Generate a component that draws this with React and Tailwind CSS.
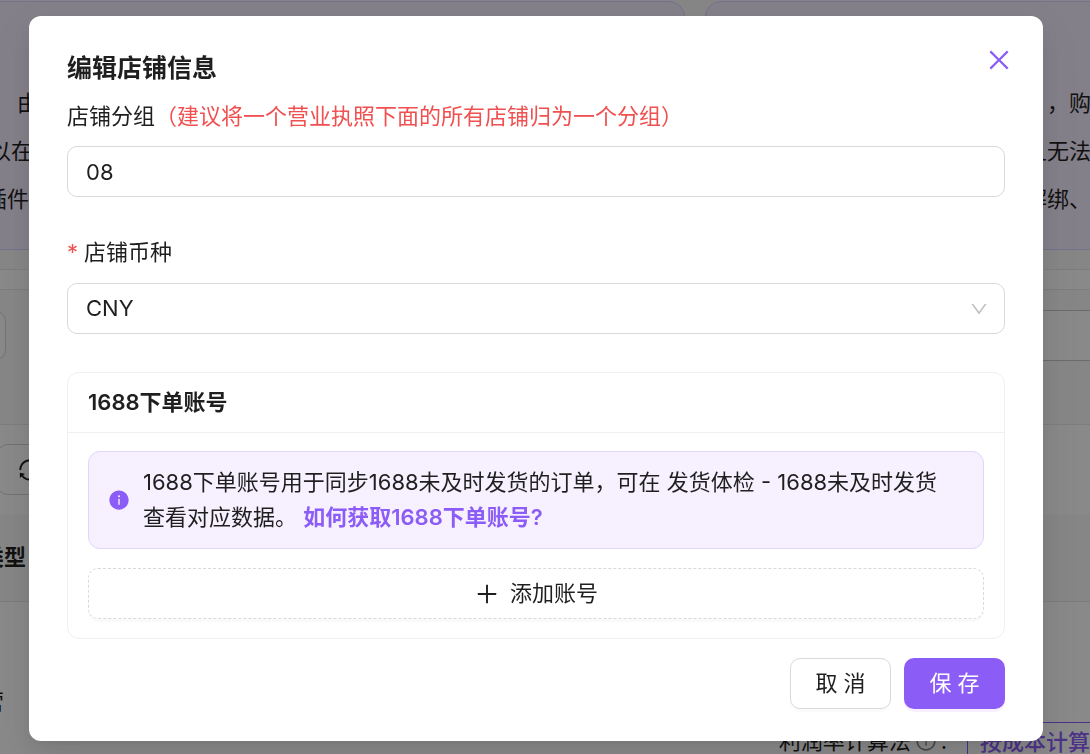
import React, { useState } from "react";
import {
  AiFillInfoCircle,
  AiOutlineClose,
  AiOutlineDown,
  AiOutlineInfoCircle,
  AiOutlinePlus,
  AiOutlineSync,
} from "react-icons/ai";

const ShopPage = () => {
  return (
    <div className="flex h-screen flex-col overflow-hidden bg-white">
      <div className="shrink-0 bg-[#f5f5f5] pt-px pb-[19px]">
        <div className="grid grid-cols-[16fr_9fr] gap-5 leading-[48px]">
          <div className="-ml-5 h-[249px] overflow-hidden rounded-r-2xl border border-[#d9ccff] bg-[#f1eafb] pt-[77px] pl-5 whitespace-nowrap">
            <p className="ml-4">由</p>
            <p className="-ml-3">以在</p>
            <p className="-ml-4">插件中</p>
          </div>
          <div className="-mr-5 h-[249px] overflow-hidden rounded-l-2xl border border-[#d9ccff] bg-[#f1eafb] pt-[77px] pr-[18px] text-right whitespace-nowrap">
            <p>，购</p>
            <p>且无法</p>
            <p>解绑、</p>
          </div>
        </div>
      </div>

      <div className="h-5 shrink-0 border-t border-[#e4e4e4] bg-[#fafafa]" />

      <div className="flex h-[136px] shrink-0 items-start justify-between border-y border-[#e4e4e4] bg-[#f5f5f5] pt-5">
        <input
          aria-label="店铺名称"
          className="-ml-12 h-[51px] w-[54px] rounded-xl border border-[#d0d0d0] bg-[#fafafa]"
        />
        <input
          aria-label="店铺备注"
          className="-mr-5 h-[51px] w-1/5 rounded-xl border border-[#c4c4c4] bg-[#fafafa]"
        />
      </div>

      <div className="h-[89px] shrink-0 bg-[#fafafa] pt-[19px]">
        <button
          type="button"
          aria-label="刷新"
          className="-ml-1 flex h-[51px] w-20 items-center rounded-xl border border-[#d0d0d0] pl-5"
        >
          <AiOutlineSync className="size-[26px]" />
        </button>
      </div>

      <table className="w-full shrink-0 text-left">
        <thead>
          <tr className="h-[87px] border-b border-[#e0e0e0] bg-[#f4f4f4]">
            <th className="font-bold whitespace-nowrap">
              <div className="-ml-[18px]">类型</div>
            </th>
          </tr>
        </thead>
        <tbody>
          <tr className="bg-[#fafafa]">
            <td className="h-[121px] pt-20">
              <div className="-ml-[18px]">营</div>
            </td>
          </tr>
        </tbody>
      </table>

      <div className="flex shrink-0 justify-end bg-[#fafafa] leading-[38px]">
        <span>利润率计算法</span>
        <AiOutlineInfoCircle className="mt-2 ml-1 size-[22px] text-[#888888]" />
        <span className="ml-1">:</span>
        <a
          href="#cost"
          className="ml-5 border-t border-l border-[#8b5cf6] pl-3 font-medium whitespace-nowrap text-[#8b5cf6]"
        >
          按成本计算
        </a>
      </div>
    </div>
  );
};

const EditShopModal = () => {
  const [group, setGroup] = useState("08");
  const [currency, setCurrency] = useState("CNY");

  return (
    <div
      role="dialog"
      aria-labelledby="modal-title"
      className="w-full rounded-xl bg-white px-[38px] py-8 shadow-[0_10px_25px_rgba(0,0,0,0.08),0_5px_9px_-6px_rgba(0,0,0,0.12),0_14px_44px_13px_rgba(0,0,0,0.05)]"
    >
      <div className="flex items-start justify-between">
        <h2 id="modal-title" className="text-[25px] leading-10 font-bold">
          编辑店铺信息
        </h2>
        <button type="button" aria-label="关闭" className="-mt-0.5 -mr-2 text-[#8b5cf6]">
          <AiOutlineClose className="size-7" />
        </button>
      </div>

      <label htmlFor="group" className="mt-2.5 block leading-9">
        店铺分组<span className="text-[#f0504f]">（建议将一个营业执照下面的所有店铺归为一个分组）</span>
      </label>
      <input
        id="group"
        value={group}
        onChange={(e) => setGroup(e.target.value)}
        className="mt-3 block h-[51px] w-full rounded-[10px] border border-[#d9d9d9] px-[18px] outline-none"
      />

      <label htmlFor="currency" className="mt-[37px] flex leading-9">
        <span className="mr-1.5 text-[#f0504f]">*</span>
        店铺币种
      </label>
      <div className="relative mt-[13px]">
        <select
          id="currency"
          value={currency}
          onChange={(e) => setCurrency(e.target.value)}
          className="block h-[51px] w-full appearance-none rounded-[10px] border border-[#d9d9d9] bg-white px-[18px] outline-none"
        >
          <option value="CNY">CNY</option>
          <option value="USD">USD</option>
        </select>
        <AiOutlineDown className="pointer-events-none absolute inset-y-0 right-4 my-auto size-5 text-[#bfbfbf]" />
      </div>

      <section className="mt-[38px] rounded-xl border border-[#f0f0f0]">
        <h3 className="border-b border-[#f0f0f0] px-5 leading-[59px] font-semibold">
          1688下单账号
        </h3>
        <div className="px-5 pt-[18px] pb-[19px]">
          <div className="flex items-center gap-[13px] rounded-xl border border-[#e2d6fb] bg-[#f6f0ff] py-[13px] pr-8 pl-[19px] leading-[35px]">
            <AiFillInfoCircle className="size-[22px] shrink-0 text-[#8b5cf6]" />
            <p>
              1688下单账号用于同步1688未及时发货的订单，可在 发货体检 - 1688未及时发货查看对应数据。{" "}
              <a href="#help" className="font-semibold text-[#8b5cf6]">
                如何获取1688下单账号?
              </a>
            </p>
          </div>
          <button
            type="button"
            className="mt-[19px] flex h-[51px] w-full items-center justify-center gap-2.5 rounded-[10px] border border-dashed border-[#d9d9d9] shadow-[0_3px_0_rgba(0,0,0,0.02)]"
          >
            <AiOutlinePlus className="size-[26px]" />
            添加账号
          </button>
        </div>
      </section>

      <div className="mt-[19px] flex justify-end gap-[13px]">
        <button
          type="button"
          className="h-[51px] w-[101px] rounded-[10px] border border-[#d9d9d9] shadow-[0_3px_0_rgba(0,0,0,0.02)]"
        >
          取 消
        </button>
        <button
          type="button"
          className="h-[51px] w-[101px] rounded-[10px] bg-[#8b5cf6] text-white shadow-[0_3px_0_#f9f0ff]"
        >
          保 存
        </button>
      </div>
    </div>
  );
};

const App = () => {
  return (
    <div className="font-[Inter,'Noto_Sans_CJK_SC',sans-serif] text-[22px] text-[#1f1f1f]">
      <ShopPage />
      <div className="fixed inset-0 overflow-hidden bg-black/45 pt-4 pr-[47px] pl-[29px]">
        <EditShopModal />
      </div>
    </div>
  );
};

export default App;
